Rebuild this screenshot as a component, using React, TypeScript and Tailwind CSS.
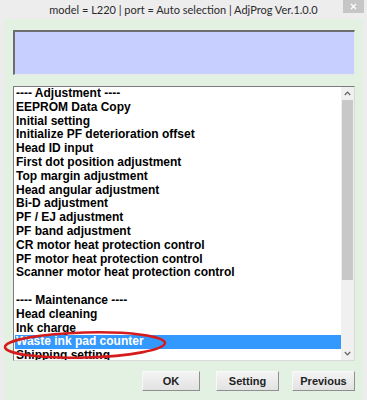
import React from "react";

const items: { t: string; sel?: boolean }[] = [
  { t: "---- Adjustment ----" },
  { t: "EEPROM Data Copy" },
  { t: "Initial setting" },
  { t: "Initialize PF deterioration offset" },
  { t: "Head ID input" },
  { t: "First dot position adjustment" },
  { t: "Top margin adjustment" },
  { t: "Head angular adjustment" },
  { t: "Bi-D adjustment" },
  { t: "PF / EJ adjustment" },
  { t: "PF band adjustment" },
  { t: "CR motor heat protection control" },
  { t: "PF motor heat protection control" },
  { t: "Scanner motor heat protection control" },
  { t: "\u00a0" },
  { t: "---- Maintenance ----" },
  { t: "Head cleaning" },
  { t: "Ink charge" },
  { t: "Waste ink pad counter", sel: true },
  { t: "Shipping setting" },
];

function Btn({ label, w }: { label: string; w: string }) {
  return (
    <div
      className={`${w} h-[20px] flex items-center justify-center bg-gradient-to-b from-[#f4f4f4] to-[#e2e2e2] border border-t-[#f8f8f8] border-l-[#f8f8f8] border-r-[#8f8f8f] border-b-[#8f8f8f] text-[11px] font-bold text-[#222]`}
    >
      {label}
    </div>
  );
}

export default function App() {
  return (
    <div
      className="relative w-[367px] h-[400px] overflow-hidden bg-[#ededed]"
      style={{ fontFamily: '"Liberation Sans", Arial, sans-serif' }}
    >
      <div className="h-[19px] grid grid-cols-[1fr_auto_1fr] items-start">
        <div />
        <div
          className="pt-[2px] text-[11px] leading-[15px] text-[#2a2a2a] whitespace-nowrap"
          style={{ fontFamily: 'Lato, "Noto Sans", sans-serif' }}
        >
          model = L220 | port = Auto selection | AdjProg Ver.1.0.0
        </div>
        <div className="flex justify-end pr-[3px]">
          <div className="w-[21px] h-[13px] bg-[#c6c6c6] flex items-center justify-center">
            <svg width="7" height="7" viewBox="0 0 7 7">
              <path d="M1 1L6 6M6 1L1 6" stroke="#ffffff" strokeWidth="1.3" />
            </svg>
          </div>
        </div>
      </div>
      <div className="mx-[4px] h-[381px] bg-[#e3f1e3] pt-[11px] pl-[9px] pr-[8px] flex flex-col">
        <div className="h-[45px] bg-[#c6cfff] border-t-[2px] border-l-[2px] border-t-[#6e6e6e] border-l-[#6e6e6e] border-r border-b border-r-[#e8e8e8] border-b-[#e8e8e8]" />
        <div className="mt-[11px] h-[275px] flex bg-white border-t border-l border-t-[#7c7c7c] border-l-[#7c7c7c] border-b border-r border-b-[#dadada] border-r-[#dadada]">
          <div className="flex-1 overflow-hidden pl-[1px] text-[12px] font-bold text-black">
            {items.map((it, i) => (
              <div
                key={i}
                className={`h-[13.8px] leading-[13.8px] pl-[1px] whitespace-nowrap ${
                  it.sel ? "bg-[#3399ff] text-white" : ""
                }`}
              >
                {it.t}
              </div>
            ))}
          </div>
          <div className="w-[13px] bg-[#f0f0f0] flex flex-col items-center">
            <div className="h-[13px] flex items-center justify-center">
              <svg width="7" height="5" viewBox="0 0 7 5">
                <path d="M0.8 4L3.5 1.2L6.2 4" stroke="#606060" strokeWidth="1.2" fill="none" />
              </svg>
            </div>
            <div className="w-[11px] h-[180px] bg-[#c8c8c8]" />
            <div className="flex-1" />
            <div className="h-[13px] flex items-center justify-center">
              <svg width="7" height="5" viewBox="0 0 7 5">
                <path d="M0.8 1L3.5 3.8L6.2 1" stroke="#606060" strokeWidth="1.2" fill="none" />
              </svg>
            </div>
          </div>
        </div>
        <div className="mt-[10px] flex justify-end">
          <Btn label="OK" w="w-[58px]" />
          <div className="w-[16px]" />
          <Btn label="Setting" w="w-[63px]" />
          <div className="w-[13px]" />
          <Btn label="Previous" w="w-[63px]" />
        </div>
      </div>
      <svg
        className="absolute left-0 top-[326px] pointer-events-none"
        width="175"
        height="40"
        viewBox="0 0 175 40"
      >
        <ellipse
          cx="85"
          cy="19"
          rx="80"
          ry="12.5"
          transform="rotate(-1.5 85 19)"
          fill="none"
          stroke="#d41c1c"
          strokeWidth="2.6"
        />
      </svg>
    </div>
  );
}
